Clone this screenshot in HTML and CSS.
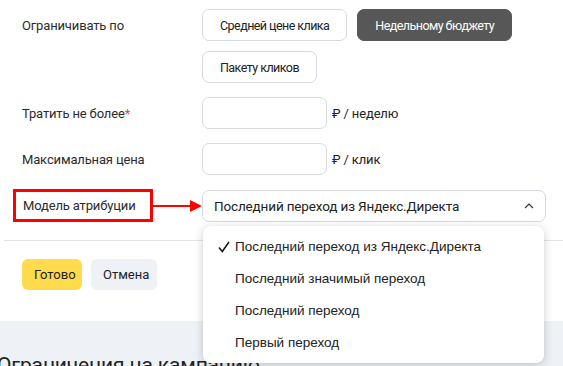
FILE: index.html
```html
<!DOCTYPE html>
<html lang="ru">
<head>
<meta charset="utf-8">
<link rel="stylesheet" href="styles.css">
</head>
<body>
<div class="page">
  <div class="form">
    <div class="row row-top">
      <div class="label">Ограничивать по</div>
      <div class="field btns">
        <button class="opt">Средней цене клика</button>
        <button class="opt opt-active">Недельному бюджету</button>
        <button class="opt">Пакету кликов</button>
      </div>
    </div>
    <div class="row">
      <div class="label">Тратить не более<span class="req">*</span></div>
      <div class="field">
        <div class="input"></div>
        <span class="unit">₽ / неделю</span>
      </div>
    </div>
    <div class="row">
      <div class="label">Максимальная цена</div>
      <div class="field">
        <div class="input"></div>
        <span class="unit">₽ / клик</span>
      </div>
    </div>
    <div class="row">
      <div class="label label-mark">
        <span class="mark">Модель атрибуции</span>
        <span class="arrow"></span>
      </div>
      <div class="field select-wrap">
        <div class="select">
          <span>Последний переход из Яндекс.Директа</span>
          <svg class="chev" width="10" height="6" viewBox="0 0 10 6"><path d="M1 5 L5 1 L9 5" fill="none" stroke="#333" stroke-width="1.2"/></svg>
        </div>
        <div class="menu">
          <div class="item"><svg class="check" width="12" height="12" viewBox="0 0 12 12"><path d="M1 6.5 L4.3 10.5 L11 1" fill="none" stroke="#111" stroke-width="1.5"/></svg>Последний переход из Яндекс.Директа</div>
          <div class="item">Последний значимый переход</div>
          <div class="item">Последний переход</div>
          <div class="item">Первый переход</div>
        </div>
      </div>
    </div>
  </div>
  <div class="sep"></div>
  <div class="actions">
    <button class="act act-yes">Готово</button>
    <button class="act act-no">Отмена</button>
  </div>
  <div class="gray">
    <h2 class="heading">Ограничения на кампанию</h2>
  </div>
</div>
</body>
</html>
```

FILE: styles.css
```css
* { box-sizing: border-box; }
html, body { margin: 0; padding: 0; background: #fff; overflow: hidden; }
body { font-family: Roboto, "Liberation Sans", sans-serif; font-size: 13px; color: #222; letter-spacing: -0.15px; }
.page { width: 563px; height: 366px; overflow: hidden; }
.form { padding: 9px 0 0 0; display: flex; flex-direction: column; gap: 14px; }
.row { display: flex; align-items: center; }
.row-top { align-items: flex-start; }
.row-top .label { height: 32px; }
.label { width: 202px; padding-left: 22px; display: flex; align-items: center; color: #2b2b2b; }
.req { color: #f33; }
.field { display: flex; align-items: center; gap: 5px; }
.btns { flex-wrap: wrap; gap: 10px; width: 320px; }
.opt { height: 32px; padding: 0 17px; border: 1px solid #d6d9df; border-radius: 7px; background: #fff; font: inherit; font-size: 12.5px; letter-spacing: -0.55px; color: #222; }
.opt-active { background: #575757; border-color: #575757; color: #fff; }
.input { width: 125px; height: 32px; border: 1px solid #d6d9df; border-radius: 7px; background: #fff; }
.unit { color: #222; }
.label-mark { padding-left: 13px; position: relative; }
.mark { display: flex; align-items: center; width: 140px; height: 33px; border: 3px solid #f00; padding-left: 7px; }
.arrow { position: absolute; left: 153px; top: 50%; width: 44px; height: 2px; margin-top: -1px; background: #f00; }
.arrow::after { content: ""; position: absolute; right: -5px; top: -5px; border-left: 12px solid #f00; border-top: 6px solid transparent; border-bottom: 6px solid transparent; }
.select-wrap { position: relative; }
.select { width: 344px; height: 32px; border: 1px solid #d6d9df; border-radius: 7px; display: flex; align-items: center; justify-content: space-between; padding: 0 11px 0 11px; font-size: 13.5px; }
.menu { position: absolute; left: 1px; top: 36px; width: 341px; padding: 5px 0 4px; background: #fff; border-radius: 8px; box-shadow: 0 2px 10px rgba(0,0,0,0.2); font-family: "Liberation Sans", Arial, sans-serif; font-size: 13.5px; letter-spacing: 0; color: #222; z-index: 5; }
.item { height: 32px; display: flex; align-items: center; padding-left: 32px; position: relative; }
.check { position: absolute; left: 15px; top: 10px; }
.sep { margin: 18px 0 0 4px; height: 1px; background: #e3e3e3; }
.actions { display: flex; gap: 9px; padding: 18px 0 0 22px; height: 80px; }
.act { height: 31px; border: none; border-radius: 6px; font: inherit; color: #222; padding: 0 12px; }
.act-yes { background: #ffdb4d; width: 60px; }
.act-no { background: #eef1f5; width: 66px; }
.gray { background: #eef1f5; height: 60px; overflow: hidden; }
.heading { margin: 0; padding-top: 32px; margin-left: -3px; font-size: 21px; font-weight: 400; color: #222; white-space: nowrap; }
```
